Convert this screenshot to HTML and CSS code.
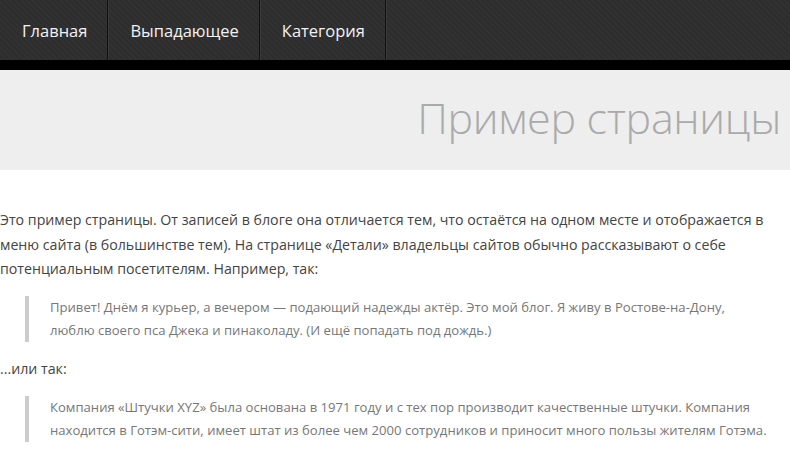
FILE: index.html
```html
<!DOCTYPE html>
<html lang="ru">
<head>
  <meta charset="UTF-8">
  <meta name="viewport" content="width=device-width, initial-scale=1.0">
  <title>Пример страницы</title>
  <link rel="stylesheet" href="styles.css">
</head>
<body>
  <nav class="menu">
    <a href="#">Главная</a>
    <a href="#">Выпадающее</a>
    <a href="#">Категория</a>
  </nav>
  <div class="menu-bottom"></div>

  <header class="page-head">
    <h1>Пример страницы</h1>
  </header>

  <div class="content">
    <p>Это пример страницы. От записей в блоге она отличается тем, что остаётся на одном месте и отображается в меню сайта (в большинстве тем). На странице «Детали» владельцы сайтов обычно рассказывают о себе потенциальным посетителям. Например, так:</p>
    <blockquote>Привет! Днём я курьер, а вечером — подающий надежды актёр. Это мой блог. Я живу в Ростове-на-Дону, люблю своего пса Джека и пинаколаду. (И ещё попадать под дождь.)</blockquote>
    <p>...или так:</p>
    <blockquote>Компания «Штучки XYZ» была основана в 1971 году и с тех пор производит качественные штучки. Компания находится в Готэм-сити, имеет штат из более чем 2000 сотрудников и приносит много пользы жителям Готэма.</blockquote>
  </div>
</body>
</html>
```

FILE: styles.css
```css
body {
  margin: 0;
  font-family: 'Open Sans', 'Noto Sans', sans-serif;
  background: #fff;
  color: #444;
}
.menu {
  display: flex;
  height: 60px;
  background-color: #2e2e2e;
  background-image: repeating-linear-gradient(45deg, rgba(255,255,255,0.015) 0 2px, rgba(0,0,0,0.03) 2px 4px);
}
.menu a {
  display: flex;
  align-items: center;
  padding: 0 20px 0 22px;
  color: #f2f2f2;
  text-decoration: none;
  font-size: 16.5px;
  border-right: 1px solid #111;
  box-shadow: 1px 0 0 #3a3a3a;
}
.menu-bottom {
  height: 10px;
  background: #000;
}
.page-head {
  height: 100px;
  background: #eeeeee;
  display: flex;
  align-items: center;
  justify-content: flex-end;
  padding-right: 9px;
}
.page-head h1 {
  margin: 0 0 5px;
  font-size: 43px;
  font-weight: 300;
  color: #aaa;
  letter-spacing: -0.3px;
}
.content {
  width: 780px;
  padding-top: 38px;
  font-size: 14.2px;
  line-height: 24.5px;
}
.content p {
  margin: 0 0 14.5px;
}
blockquote {
  margin: 0 10px 15px 25px;
  padding: 0 0 0 21px;
  border-left: 4px solid #ccc;
  color: #777;
  font-size: 13.1px;
  line-height: 23px;
}
```
